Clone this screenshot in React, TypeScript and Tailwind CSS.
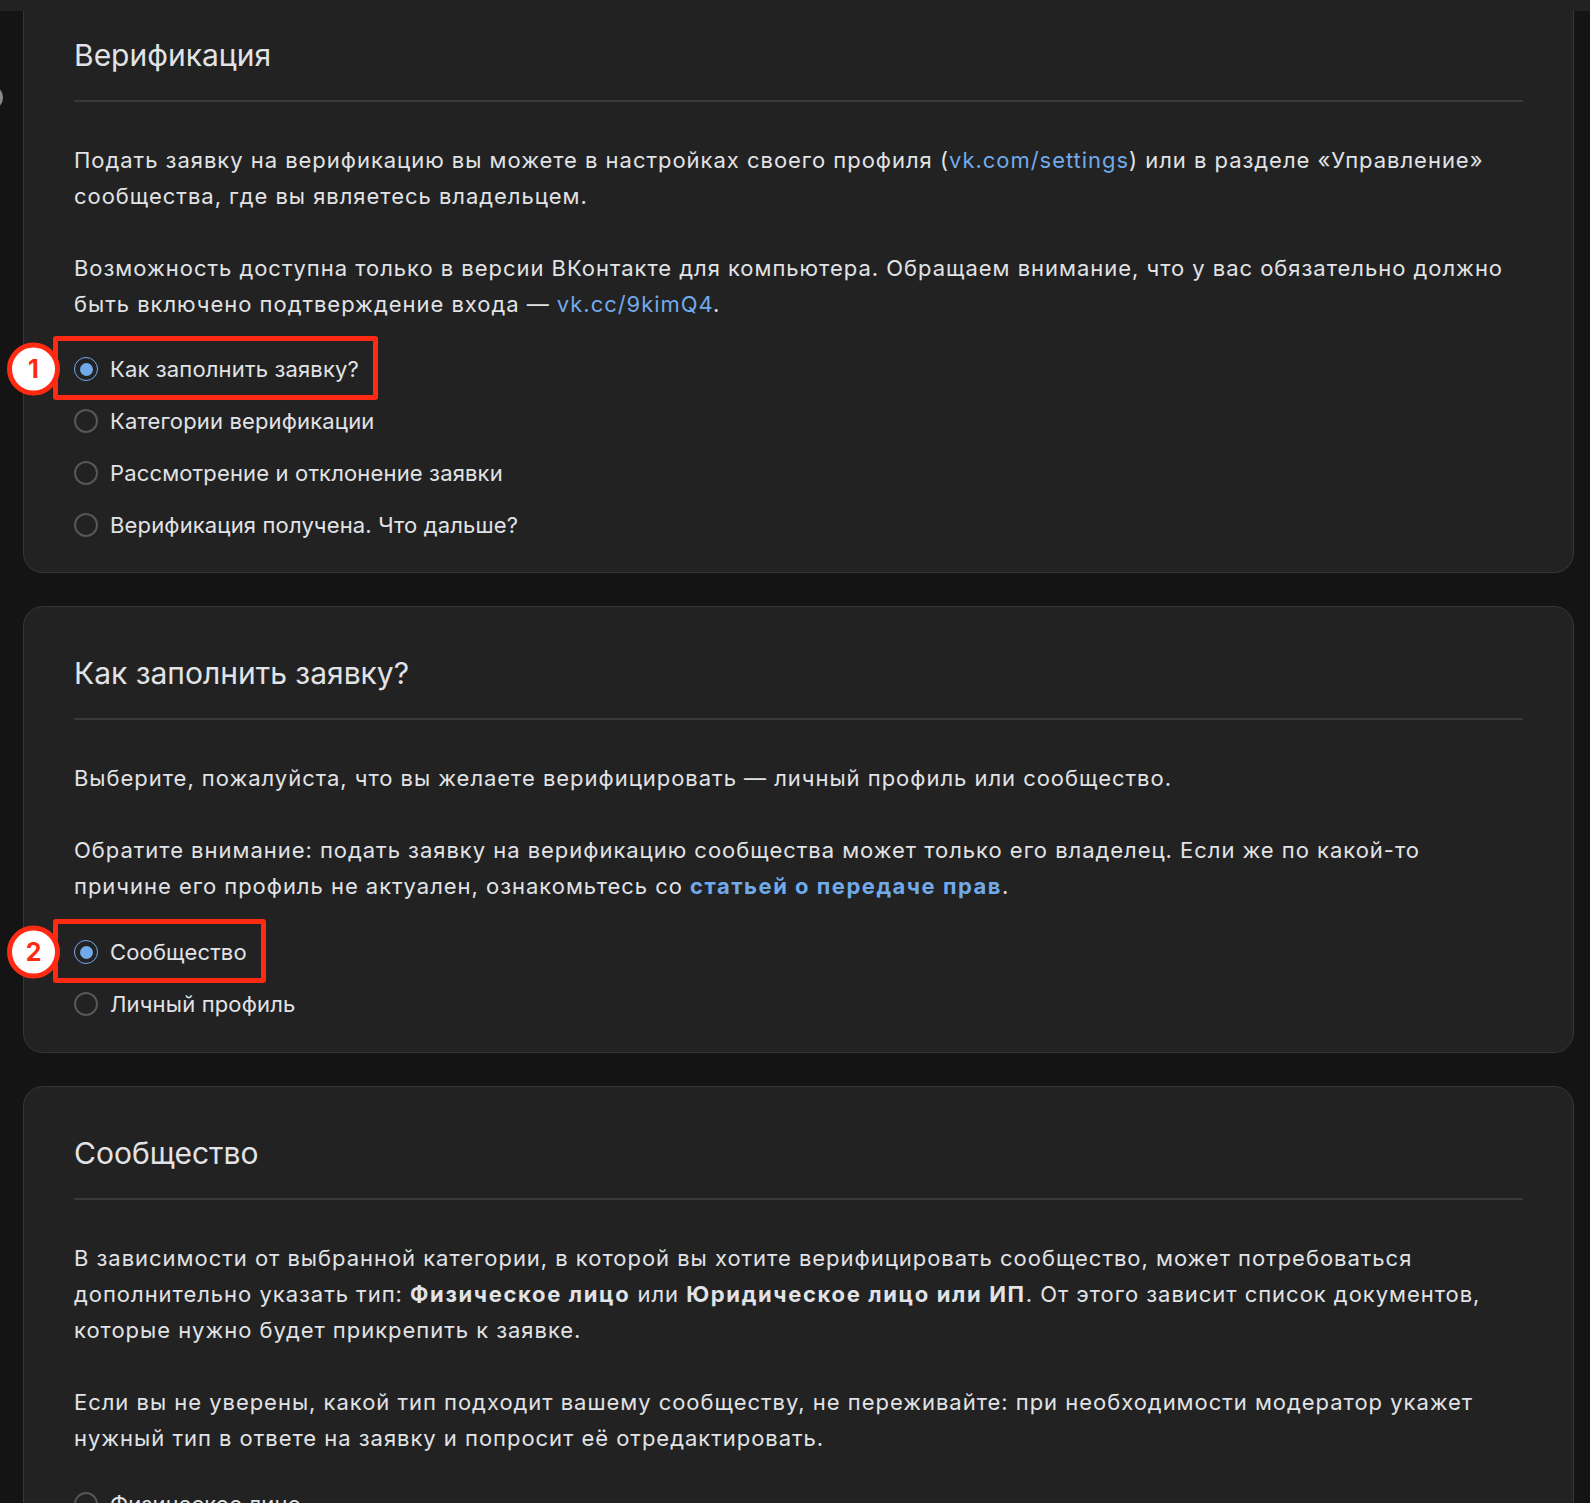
import React from 'react';

type Item = { label: string; checked?: boolean; mark?: number };

const Radio: React.FC<{ checked?: boolean }> = ({ checked }) =>
  checked ? (
    <span className="w-[24px] h-[24px] rounded-full border-[1.5px] border-[#71aaeb] flex items-center justify-center shrink-0">
      <span className="w-[13px] h-[13px] rounded-full bg-[#71aaeb]"></span>
    </span>
  ) : (
    <span className="w-[24px] h-[24px] rounded-full border-2 border-[#55575b] shrink-0"></span>
  );

const Option: React.FC<{ item: Item }> = ({ item }) => (
  <div className="flex items-center h-[52px]">
    <div className="relative inline-flex items-center gap-[12px] tracking-[0.15px]">
      <Radio checked={item.checked} />
      <span>{item.label}</span>
      {item.mark && (
        <>
          <div className="absolute left-[-21px] right-[-19px] top-[-15px] bottom-[-13px] border-[5px] border-[#ff2a12] rounded-[3px] pointer-events-none"></div>
          <div className="absolute left-[-67px] top-1/2 -translate-y-1/2 w-[53px] h-[53px] rounded-full bg-white border-[5px] border-[#ff2a12] flex items-center justify-center">
            <span className="text-[#ff2a12] text-[25px] font-bold leading-none tracking-normal">{item.mark}</span>
          </div>
        </>
      )}
    </div>
  </div>
);

const Card: React.FC<{ title: string; first?: boolean; children: React.ReactNode }> = ({ title, first, children }) => (
  <div
    className={
      first
        ? 'bg-[#222222] border-x border-b border-[#363636] rounded-b-[20px] pt-[26px] px-[50px] pb-[21px]'
        : 'bg-[#222222] border border-[#363636] rounded-[20px] pt-[48px] px-[50px] pb-[22px]'
    }
  >
    <h2 className="text-[30px] leading-[36px] font-normal text-[#e1e3e6]">{title}</h2>
    <div className="mt-[27px] h-[2px] bg-[#393939]"></div>
    <div className="mt-[40px]">{children}</div>
  </div>
);

const Link: React.FC<{ children: React.ReactNode; bold?: boolean }> = ({ children, bold }) => (
  <a className={bold ? 'text-[#71aaeb] font-bold tracking-[1.5px]' : 'text-[#71aaeb]'}>{children}</a>
);

const Strong: React.FC<{ children: React.ReactNode }> = ({ children }) => (
  <b className="font-bold tracking-[1.65px]">{children}</b>
);

export default function App() {
  const verification: Item[] = [
    { label: 'Как заполнить заявку?', checked: true, mark: 1 },
    { label: 'Категории верификации' },
    { label: 'Рассмотрение и отклонение заявки' },
    { label: 'Верификация получена. Что дальше?' },
  ];
  const howTo: Item[] = [
    { label: 'Сообщество', checked: true, mark: 2 },
    { label: 'Личный профиль' },
  ];
  const community: Item[] = [{ label: 'Физическое лицо' }, { label: 'Юридическое лицо или ИП' }];

  return (
    <div
      className="relative w-full h-[1503px] overflow-hidden bg-[#141414] text-[#e1e3e6] text-[22px] leading-[36px]"
      style={{ fontFamily: 'Inter, "Noto Sans", sans-serif' }}
    >
      <div className="h-[11px] bg-[#222222]"></div>
      <div className="absolute left-[-22px] top-[85px] w-[25px] h-[25px] rounded-full bg-[#8a8a8a]"></div>

      <div className="pl-[23px] pr-[16px] flex flex-col gap-[33px]">
        <Card title="Верификация" first>
          <div className="max-w-[1440px] space-y-[36px] tracking-[0.97px]">
            <p>
              Подать заявку на верификацию вы можете в настройках своего профиля (<Link>vk.com/settings</Link>) или в
              разделе «Управление» сообщества, где вы являетесь владельцем.
            </p>
            <p>
              Возможность доступна только в версии ВКонтакте для компьютера. Обращаем внимание, что у вас обязательно
              должно быть включено подтверждение входа — <Link>vk.cc/9kimQ4</Link>.
            </p>
          </div>
          <div className="mt-[21px]">
            {verification.map((item) => (
              <Option key={item.label} item={item} />
            ))}
          </div>
        </Card>

        <Card title="Как заполнить заявку?">
          <div className="max-w-[1436px] space-y-[36px] tracking-[0.97px]">
            <p>Выберите, пожалуйста, что вы желаете верифицировать — личный профиль или сообщество.</p>
            <p>
              Обратите внимание: подать заявку на верификацию сообщества может только его владелец. Если же по
              какой-то причине его профиль не актуален, ознакомьтесь со <Link bold>статьей о передаче прав</Link>.
            </p>
          </div>
          <div className="mt-[22px]">
            {howTo.map((item) => (
              <Option key={item.label} item={item} />
            ))}
          </div>
        </Card>

        <Card title="Сообщество">
          <div className="max-w-[1440px] space-y-[36px] tracking-[0.97px]">
            <p>
              В зависимости от выбранной категории, в которой вы хотите верифицировать сообщество, может потребоваться
              дополнительно указать тип: <Strong>Физическое лицо</Strong> или <Strong>Юридическое лицо или ИП</Strong>.
              От этого зависит список документов, которые нужно будет прикрепить к заявке.
            </p>
            <p>
              Если вы не уверены, какой тип подходит вашему сообществу, не переживайте: при необходимости модератор
              укажет нужный тип в ответе на заявку и попросит её отредактировать.
            </p>
          </div>
          <div className="mt-[22px]">
            {community.map((item) => (
              <Option key={item.label} item={item} />
            ))}
          </div>
        </Card>
      </div>
    </div>
  );
}
